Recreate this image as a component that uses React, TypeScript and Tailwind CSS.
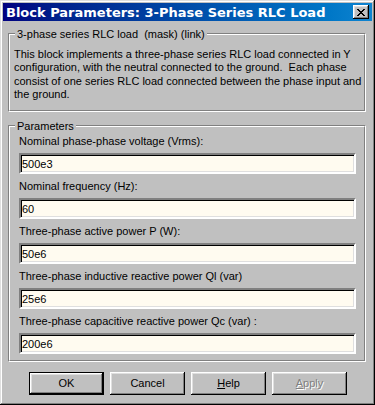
import React from 'react';

const raised =
  'shadow-[inset_-1px_-1px_#000,inset_1px_1px_#fff,inset_-2px_-2px_#808080,inset_2px_2px_#dfdfdf]';

const fields = [
  { label: 'Nominal phase-phase voltage (Vrms):', value: '500e3' },
  { label: 'Nominal frequency (Hz):', value: '60' },
  { label: 'Three-phase active power P (W):', value: '50e6' },
  { label: 'Three-phase inductive reactive power Ql (var)', value: '25e6' },
  { label: 'Three-phase capacitive reactive power Qc (var) :', value: '200e6' },
];

function GroupBox({ title, className, children }: { title: string; className: string; children: React.ReactNode }) {
  return (
    <div className={`relative border border-[#808080] border-r-white border-b-white ${className}`}>
      <div className="h-full border border-white border-r-[#808080] border-b-[#808080]">{children}</div>
      <span className="absolute -top-[6px] left-[6px] px-[2px] bg-[#c0c0c0] leading-[13px] whitespace-pre">{title}</span>
    </div>
  );
}

function CloseGlyph() {
  return (
    <svg width="8" height="7" viewBox="0 0 8 7" shapeRendering="crispEdges">
      <path
        fill="#000"
        d="M0 0h2v1H0zM6 0h2v1H6zM1 1h2v1H1zM5 1h2v1H5zM2 2h4v1H2zM3 3h2v1H3zM2 4h4v1H2zM1 5h2v1H1zM5 5h2v1H5zM0 6h2v1H0zM6 6h2v1H6z"
      />
    </svg>
  );
}

export default function App() {
  return (
    <div className="w-[375px] h-[405px] overflow-hidden bg-[#c0c0c0] p-[3px] flex flex-col text-[11px] text-black font-['Liberation_Sans',Arial,sans-serif] shadow-[inset_-1px_-1px_#000,inset_1px_1px_#dfdfdf,inset_-2px_-2px_#808080,inset_2px_2px_#fff]">
      {/* caption */}
      <div className="h-[18px] flex items-center justify-between pl-[3px] pr-[3px] bg-linear-to-r from-[#000080] to-[#1084d0]">
        <span className="text-white font-bold text-[13px] leading-none whitespace-pre font-['DejaVu_Sans',Verdana,sans-serif]">Block Parameters: 3-Phase Series RLC Load</span>
        <button className={`w-[16px] h-[14px] flex items-center justify-center bg-[#c0c0c0] ${raised}`}>
          <CloseGlyph />
        </button>
      </div>

      <GroupBox title="3-phase series RLC load  (mask) (link)" className="mt-[12px] ml-[5px] mr-[6px] h-[79px]">
        <p className="pt-[13px] pl-[4px] leading-[13.3px] whitespace-pre">
          {'This block implements a three-phase series RLC load connected in Y\nconfiguration, with the neutral connected to the ground.  Each phase\nconsist of one series RLC load connected between the phase input and\nthe ground.'}
        </p>
      </GroupBox>

      <GroupBox title="Parameters" className="mt-[13px] ml-[5px] mr-[6px] h-[237px]">
        <div className="flex flex-col pt-[8px] pl-[9px] pr-[8px]">
          {fields.map((f, i) => (
            <div key={f.label} className={`flex flex-col ${i > 0 ? 'mt-[6px]' : ''}`}>
              <label className="leading-[13px] whitespace-pre">{f.label}</label>
              <input
                readOnly
                defaultValue={f.value}
                className="mt-[5px] h-[21px] px-[1px] bg-[#fffbf0] leading-[13px] outline-none border-2 border-t-[#808080] border-l-[#808080] border-r-white border-b-white shadow-[inset_1px_1px_#000,inset_-1px_-1px_#dfdfdf]"
              />
            </div>
          ))}
        </div>
      </GroupBox>

      <div className="mt-[10px] pl-[26px] flex gap-[6px]">
        <button className="w-[75px] h-[23px] border border-black">
          <div className={`w-full h-full flex items-center justify-center ${raised}`}>OK</div>
        </button>
        <button className={`w-[75px] h-[23px] flex items-center justify-center ${raised}`}>Cancel</button>
        <button className={`w-[75px] h-[23px] flex items-center justify-center ${raised}`}>
          <span><span className="underline">H</span>elp</span>
        </button>
        <button disabled className={`w-[75px] h-[23px] flex items-center justify-center text-[#808080] [text-shadow:1px_1px_#fff] ${raised}`}>
          <span><span className="underline">A</span>pply</span>
        </button>
      </div>
    </div>
  );
}
